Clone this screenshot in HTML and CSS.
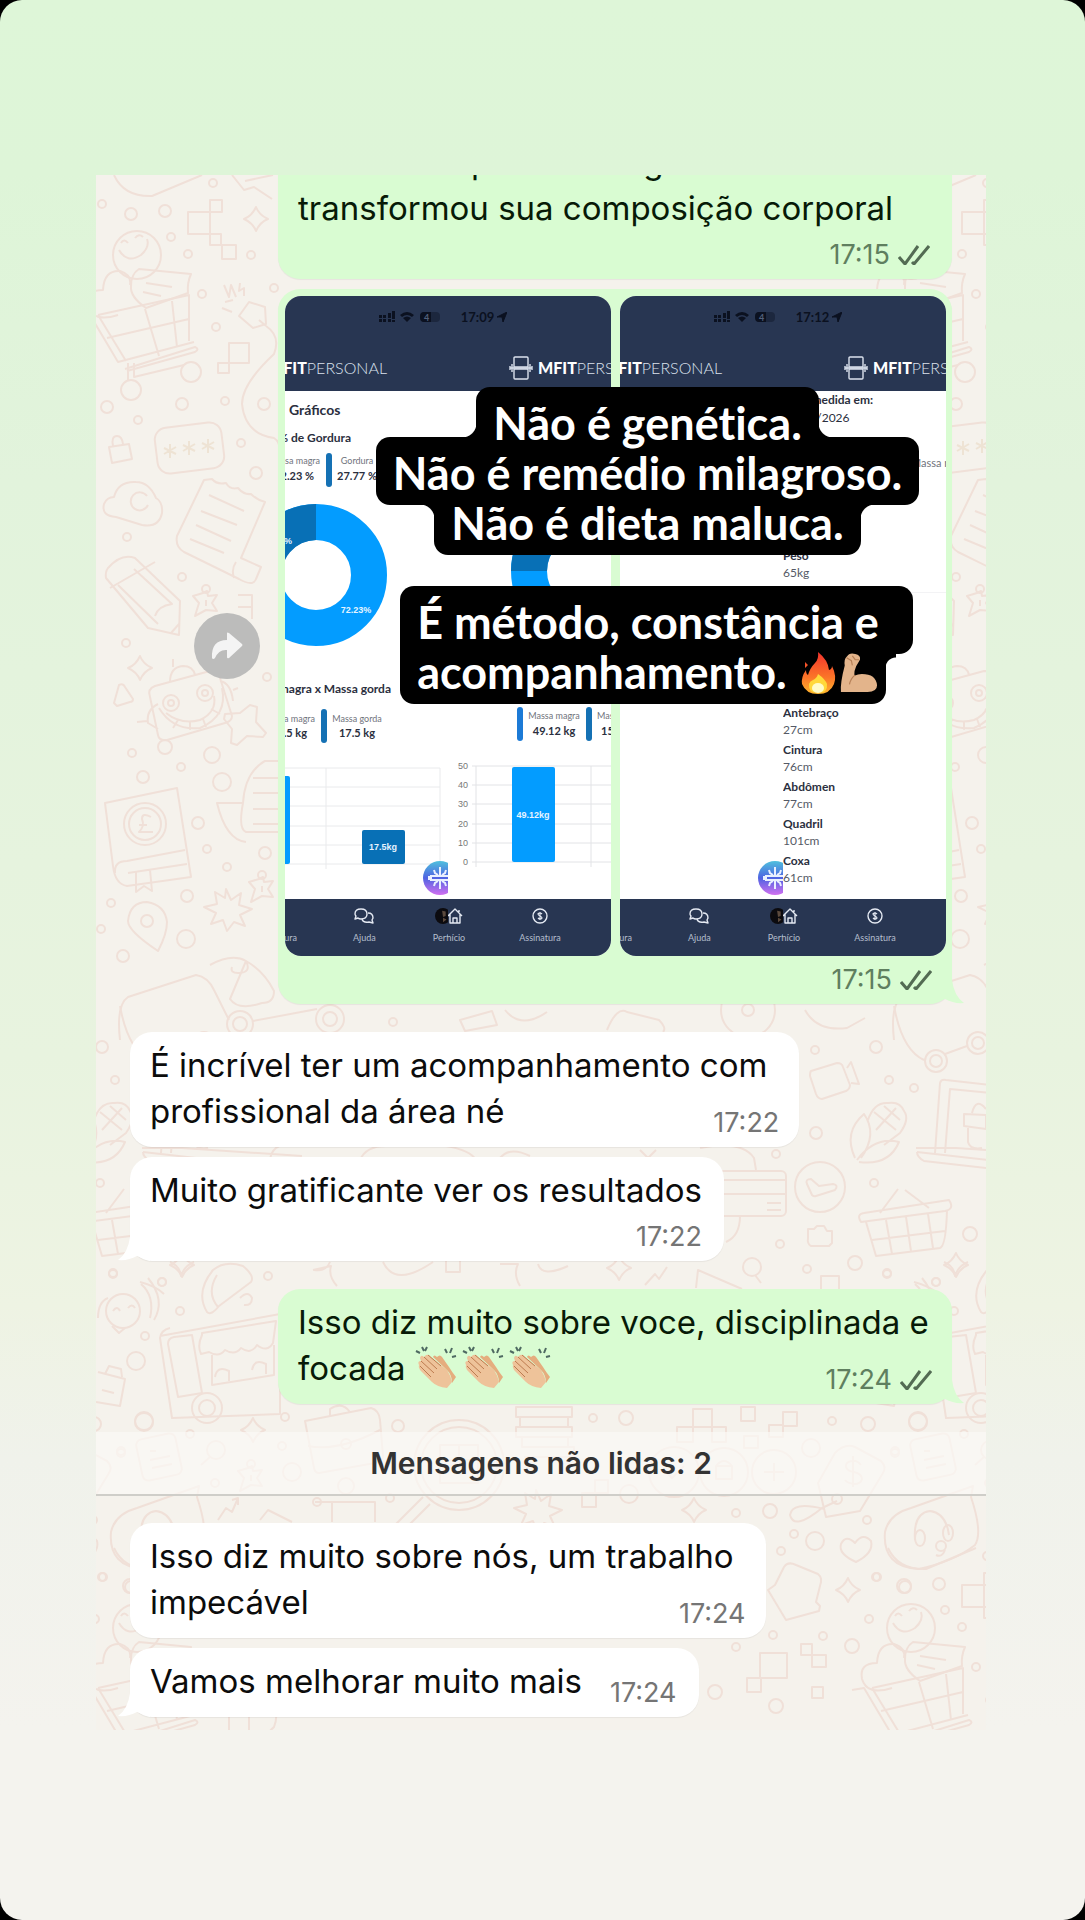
FILE: index.html
```html
<!DOCTYPE html>
<html lang="pt-BR">
<head>
  <meta charset="UTF-8">
  <meta name="viewport" content="width=device-width, initial-scale=1.0">
  <title>Não é genética. É método</title>
  <link rel="stylesheet" href="styles.css">
</head>
<body>
  <!-- Shared icons -->
  <svg class="defs" aria-hidden="true">
    <defs>
      <symbol id="checks" viewBox="0 0 32 20">
        <path d="M1 12l6 7L20 1M14 17l2 2L31 1" fill="none" stroke="#536b53" stroke-width="3"/>
      </symbol>
      <symbol id="status" viewBox="0 0 62 14">
        <g fill="#0b1120">
          <path d="M0 5h3v3H0zM0 9h3v3H0zM4 5h3v3H4zM4 9h3v3H4zM9 3h3v5H9zM9 9h3v3H9zM13 1h3v8h-3zM13 10h3v2h-3z"/>
          <path d="M21 5q7-6 14 0l-2 2q-5-4-10 0zM24 8q4-3 8 0l-4 4z"/>
          <rect x="41" y="2" width="20" height="10" rx="4" opacity=".4"/>
          <path d="M45 2h7v10h-7q-4 0-4-5t4-5z"/>
        </g>
        <text x="45" y="11" font-size="9" font-weight="700" fill="#52607c">4</text>
      </symbol>
      <symbol id="nav-arrow" viewBox="0 0 10 10"><path d="M0 5L10 0 6 10 5 5z" fill="#0b1120" stroke="#0b1120"/></symbol>
      <symbol id="mfit" viewBox="0 0 24 24">
        <g fill="none" stroke="#dbe2ee" stroke-width="1.4">
          <path d="M5 11V2q0-1 1-1h12q1 0 1 1v9zM5 13v9q0 1 1 1h12q1 0 1-1v-9z"/>
          <path d="M1 10v4M3 8v8M21 8v8M23 10v4M1 12h22"/>
        </g>
      </symbol>
      <symbol id="chat" viewBox="0 0 20 16">
        <g fill="none" stroke="#e4e9f2" stroke-width="1.4" stroke-linejoin="round">
          <path d="M7 1q6 0 6 5t-6 5q-2 0-3-1l-3 1 1-3Q1 7 1 6q0-5 6-5z"/>
          <path d="M14 5q5 0 5 5l-1 2 1 3-4-1q-6 1-7-3"/>
        </g>
      </symbol>
      <symbol id="home" viewBox="0 0 16 16">
        <path d="M1 8l7-7 7 7M3 6v9h10V6M6 15v-5h4v5M12 4V2" fill="none" stroke="#e4e9f2" stroke-width="1.4" stroke-linejoin="round"/>
      </symbol>
      <symbol id="money" viewBox="0 0 16 16">
        <circle cx="8" cy="8" r="7" fill="none" stroke="#e4e9f2" stroke-width="1.4"/>
        <path d="M10 6q-1-1-2-1-2 0-2 1t2 2 2 2-2 1q-1 0-2-1M8 4v8" fill="none" stroke="#e4e9f2" stroke-width="1.2"/>
      </symbol>
      <symbol id="face" viewBox="0 0 18 18">
        <circle cx="9" cy="9" r="9" fill="#0c0b0f"/>
        <path d="M8 3l4 1v5l-3 1zM9 11l4 2-4 3z" fill="#5c4a3d"/>
      </symbol>
      <linearGradient id="ai-fill" x1="0" y1="0" x2="0" y2="1">
        <stop offset="0" stop-color="#4fc0dd"/><stop offset=".5" stop-color="#4f63e2"/><stop offset="1" stop-color="#d070f0"/>
      </linearGradient>
      <symbol id="ai" viewBox="0 0 34 34">
        <circle cx="17" cy="17" r="17" fill="url(#ai-fill)"/>
        <path d="M8 14v6M6 15v4M8 15h18M8 19h18M17 6v9M17 19v9M11 9l1 3 3 2M23 9l-1 3-3 2M11 25l1-3 3-2M23 25l-1-3-3-2" fill="none" stroke="#eaf0ff" stroke-width="2"/>
      </symbol>
      <symbol id="clap" viewBox="0 0 42 43">
        <path d="M1 6l4 2M7 2l2 4M12 2l-2 4M30 4l2 4M37 3l-2 5M41 11l-4 1" stroke="#4f6a62" stroke-width="2"/>
        <path d="M4 20q-2-4 2-4l-1-3q1-4 4-1l2-2q3-1 5 2l16 13q4 6 5 12l-5 6q-10-1-15-6L5 25q-2-3-1-5z" fill="#eec39a"/>
        <path d="M22 12q3-3 5 0l7 10q3 5 7 10l-4 6q0-8-5-13L18 12q1-3 4 0z" fill="#e5ad7e"/>
        <path d="M6 16l13 12M9 12l13 12M13 10l13 11M5 21l11 11" fill="none" stroke="#bd7c50" stroke-width="1"/>
      </symbol>
      <linearGradient id="fire-fill" x1="0" y1="0" x2="0" y2="1">
        <stop offset="0" stop-color="#f2332c"/><stop offset=".6" stop-color="#fb7428"/><stop offset="1" stop-color="#ffb52d"/>
      </linearGradient>
      <symbol id="fire" viewBox="0 0 36 44">
        <path d="M17 1q10 8 11 18 3-1 3-4 5 10 2 18-4 10-16 10T1 33q-1-7 4-14 0 4 2 5 2-7 7-12 4-4 3-11zM4 11l3 3-3 3z" fill="url(#fire-fill)"/>
        <path d="M17 23q7 5 9 10 1 9-9 9t-9-9q1-3 4-4 4-2 5-6z" fill="#ffd83a"/>
        <ellipse cx="17" cy="37" rx="6" ry="5" fill="#fffbc8"/>
      </symbol>
      <symbol id="arm" viewBox="0 0 40 44">
        <path d="M5 14q-1-6 2-9 3-5 9-3 6 1 5 6l-4 7q-2 4-2 10 4-2 8-2 15 0 16 12 0 7-10 7H1q-1-9 4-28z" fill="#e3b48b"/>
        <path d="M16 24q-5 4-6 10M7 6l5 3 1 5M13 4l3 4 4 0" fill="none" stroke="#b67f56" stroke-width="1.2"/>
      </symbol>

      <!-- Wallpaper drawings -->
      <path id="spark" d="M0-12Q3-4 12 0 4 3 0 12-3 4-12 0-4-3 0-12z"/>
      <path id="burst" d="M0-20l5 11 10-7-2 12 13 4-12 6 5 11-11-4-7 9-4-11-12 4 5-11-12-6 13-3-2-12 10 6z"/>
      <g id="pin"><circle cy="-10" r="4"/><path d="M-3-6l-10 3 6 7-4 13 11-6 11 1-5-8 5-8-9 1-1-5zM0 1v6"/></g>
      <g id="lens"><circle r="9"/><path d="M-6 7l-9 8"/></g>
      <g id="doodles">
        <path d="M114 175q10 22 38 21l50-21M232 175l12 15 10-3 18 12M245 181l28-6"/>
        <path d="M188 212h22v22h-22zM210 200h12v12h-12zM210 234h11v11h-11zM222 245h14v14h-14zM229 343h20v20h-20zM218 363h11v10h-11z"/>
        <use href="#spark" x="256" y="219"/>
        <circle cx="137" cy="255" r="24"/>
        <path d="M121 243q3-5 7 0M135 238q4-5 8-1M119 250q8 14 22 5 9-8 6-16"/>
        <path d="M118 315q-25 8-30-9-3-16 15-16 1-20 17-19 12 4 10 14"/>
        <path d="M139 269l52 5q-4 9-3 19l-42 15q-16-11-15-22 0-12 8-17zM146 283l26 4M143 292l18 4"/>
        <path d="M78 317l12-2 28 47 76-20M98 315l91-20v46M145 309l14 47M172 301l5 46M107 338l82-19M98 315l28 46M128 363v18M134 363v14l50-12M125 369l70-22q5 2 0 5l-68 19"/>
        <circle cx="131" cy="390" r="10"/><circle cx="191" cy="372" r="10"/>
        <path d="M224 285l5 12 2-12 5 12M240 283l-1 8 5-3v8M225 302l8-2M222 308l10 4M239 316l10-14 16 5 1 17-13 4zM259 320l7 6"/>
        <path d="M266 326q15 10 8 28-32 30-32 50 3 30 32 34 8 5 5 20"/>
        <rect x="156" y="425" width="67" height="46" rx="12" transform="rotate(-7 189 448)"/>
        <path d="M170 444v14M164 448l12 6M176 447l-12 7M189 441v14M183 445l12 6M195 444l-12 7M208 439v14M202 443l12 6M214 442l-12 7" stroke="#eee3d4"/>
        <path d="M109 447l20-3 3 15-20 4zM113 446q-2-10 4-10 5 0 6 8"/>
        <path d="M116 517q-15-1-12-13 3-7 10-7 4-16 22-15 13 0 20 16 7 4 6 15-3 15-20 12zM147 496a9 9 0 1 0 1 9"/>
        <path d="M204 480l-27 56q-2 11 7 16l55 27q14 8 17 0l5-12-20-9 24-56q-8-2-14-8-7 1-13-6-8 2-12-5-9 2-14-4zM236 562q-5 7-2 16M209 495l35 16M201 511l36 14M196 525l35 16M190 539l34 14"/>
        <path d="M110 588l45-26M106 578l42 50 31 7 1-34-45-43q-14-5-27 10-3 4-2 10zM118 585l40 39M134 569l38 35q-14 2-17 12M171 633l8-9"/>
        <use href="#pin" x="206" y="599"/><use href="#spark" x="140" y="668"/>
        <path d="M114 703l5-18q4-2 6 2l8 12q0 3-3 3l-13 4zM238 595h14v24M238 607h14"/>
        <path d="M150 697q-3-8 5-11l55-15q8 0 10 7l12 38q0 5-7 7l-58 17q-8 1-9-5zM170 682q0-15 13-16 10 0 12 9M173 667v-8M158 704q-12 6-10 19l10 6M147 721l-10 1M220 681q11 2 13 20M233 690l5-2"/>
        <circle cx="171" cy="703" r="8"/><circle cx="205" cy="693" r="8"/><circle cx="171" cy="703" r="3"/><circle cx="205" cy="693" r="3"/>
        <path d="M159 708q14 23 41 20 28-12 22-40M166 713q15 12 34 7 17-8 14-24M178 720l-5 8M190 722v8M203 719l3 8M211 709l9 5"/>
        <path d="M225 714l15-1 10-8 7 2-1 15 10 11-3 4-16-1-10 9-6-2 1-14-8-10z"/>
        <path d="M246 842q-20-2-29-39h26q2-31 22-42h18v71h-37q-8-3-3-29M253 778h26M253 793h26M253 809h26M253 824h26"/>
        <path d="M105 803l72-15 14 89-64 9q-12-2-14-20zM115 873q-1-12 12-12l58-11M128 873l59-9M136 872v20l8-6 8 5-2-21"/>
        <circle cx="145" cy="824" r="21"/><circle cx="145" cy="824" r="16"/>
        <path d="M151 817q-9-5-9 2 3 7-3 13h14M139 825h8"/>
        <use href="#burst" x="226" y="909"/>
        <path d="M158 951q-30-20-30-30 2-19 19-19 18 3 20 20 0 12-9 29z"/><circle cx="147" cy="921" r="6"/>
        <use href="#pin" x="262" y="885"/>
        <path d="M120 1040q-4-35 8-43l68-22q12 2 18 15l15 30M210 965q22-12 36-4 6 12-8 12-8 0-6-6M246 961q18 10 28 30 0 12-12 12-24 8-32-4z"/>
        <circle cx="240" cy="1024" r="7"/><circle cx="240" cy="1024" r="13"/><circle cx="330" cy="1019" r="7"/><circle cx="330" cy="1019" r="14"/>
        <path d="M253 1021l64-12M460 1020l32-9 5 14-32 6zM505 1010q16 20 42 2"/>
        <path d="M142 1148h40l120 8M270 1160q2-16 20-16M360 1160q6-14 26-14h60q24 4 30 14M500 1158q10-12 30-2M640 1150l8 8 8-8"/>
        <path d="M207 1312q-12-20 6-42 12-10 30-4 12 10 8 16l-32 24q-8 10-12 6zM218 1307q-12-14-1-32M240 1298q8-8 12 0 0 8-8 7"/>
        <path d="M170 1262q10 4 11 14 3-10 13-14M313 1270l18-4q-3 10 6 20M330 1262q-4 10-16 8M383 1262q12 26 50 0M446 1258h14v14h-14zM500 1264h18q-5 10 2 22M538 1264q4 14 30 2"/>
        <circle cx="123" cy="1311" r="17"/><path d="M113 1311q4-6 7 0M128 1308q4-5 7 0M112 1326l7 7 6-5M108 1298q-10 4-10 20M141 1284q14 12 9 34M148 1278q18 22 6 42"/>
        <path d="M160 1336l120-22v100l-108 4-12-80q1-8 10-10M168 1344q0-6 6-7l18-2 10 58-24 4zM202 1333l74-12-3 22q-6 10-16 2-6 10-16 3-6 8-16 2-6 8-16 2l-8 2q-4-8 1-19zM212 1355v30l62-10v-30M215 1377q2-12 14-6v10M252 1370q2-12 14-6v10"/>
        <circle cx="207" cy="1408" r="15"/><circle cx="207" cy="1408" r="8"/>
        <path d="M98 1372l27 7-5 27-24-4M105 1374l4-8 12 3 1 8M102 1390l12 3"/>
        <use href="#spark" x="253" y="1430"/>
        <path d="M305 1421l66-13q8 2 9 12l3 36q0 5-8 7l-56 10q-4 0-5-5zM330 1416v-7q12-8 20 3M308 1446q30 6 72-16"/><circle cx="346" cy="1444" r="5"/>
        <rect x="139" y="1436" width="40" height="42" rx="6" transform="rotate(-12 159 1457)"/>
        <path d="M150 1451h6M150 1460l20-4M152 1468l20-4"/>
        <use href="#lens" x="216" y="1450"/><use href="#pin" x="251" y="1474"/>
        <circle cx="459" cy="1465" r="45"/><circle cx="459" cy="1465" r="38"/>
        <path d="M423 1497l-32 32M430 1504l-22 22M440 1445h38v38h-38zM440 1460h38M459 1445v15"/>
        <path d="M516 1407h56v10h-56zM520 1417h48v10h-48zM516 1427h56v10h-56zM522 1437h46v10h-46zM524 1447h50v10h-50"/>
        <use href="#burst" x="536" y="1510"/>
        <path d="M218 1520l8-12 6 4 6-14M232 1500l6-2v7M315 1502h60v20M332 1502v20M260 1520l8-10 24 12"/>
        <circle cx="317" cy="1502" r="4"/><circle cx="390" cy="1498" r="4"/>
        <path d="M693 1409h19v18h-19zM677 1427h16v15h-16zM712 1427h14v15h-14zM741 1407h14v14h-14zM783 1412h14v14h-14zM769 1425h14v12h-14zM744 1436h14v12h-14zM595 1480h13v13h-13zM582 1493h14v14h-14z"/>
        <circle cx="674" cy="1472" r="25"/><circle cx="724" cy="1472" r="24"/><circle cx="774" cy="1472" r="22"/>
        <path d="M764 1472h20M774 1463v18M716 1466h16v13h-16zM716 1466q8-10 16 0M664 1470l8 8 12-12"/>
        <path d="M818 1483l17-30q10-10 20-6l26 14q6 6 2 12l-23 38-34 6zM824 1509q-32-8-34 6 4 16 32-7l15-7"/><circle cx="837" cy="1499" r="5"/>
        <path d="M861 1465q-4-5-9-4-7 1-6 6 1 4 8 5 8 2 8 7-1 5-8 5-7-1-9-4M853 1456v31"/>
        <path d="M911 1508q-22 6-26 24-3 35 34 37 36-8 56-24 8-12-4-48l2-11zM915 1540q-2-27 15-29 16 2 19 24M945 1550q-3 8-9 5"/>
        <ellipse cx="920" cy="1538" rx="5" ry="8"/><ellipse cx="948" cy="1533" rx="5" ry="8"/><circle cx="941" cy="1546" r="5"/>
        <path d="M856 1562q-18-8-15-18 5-10 14-1 8-11 16-2 3 12-15 21z"/>
        <path d="M775 1585l9-18q4-6 12-2l22 9q5 4 2 12l-4 16 4 4-1 5-33 9-18-30z"/>
        <use href="#spark" x="848" y="1590"/><use href="#spark" x="694" y="1510"/>
        <path d="M760 1653h27v25h-27zM747 1678h14v14h-14zM801 1644h11v11h-11zM812 1655h14v12h-14zM812 1687h11v11h-11z"/>
        <path d="M811 1071l26-8q5 0 6 4l7 18q0 4-4 6l-24 8q-4 0-6-5l-6-18q0-4 1-5zM847 1068l4-6 8 22-8-1"/>
        <path d="M855 1158q-12-26 9-44 14 20-3 44M857 1160q18-24 42-18-10 24-40 20M868 1120q6-18 20-17 12-2 16 8 6 8-4 22l-16 12M874 1112l22 18M884 1106l16 14M876 1130l20-22"/>
        <path d="M935 1153l5-70q1-4 6-3l52 6M945 1153l5-64 50 5M917 1152l80 9-1 8-72-8q-7-4-7-9M964 1114l22 1v14l-22-3zM968 1128v14q2 8 14 6M972 1113q4-16 14-4"/>
        <rect x="690" y="1171" width="96" height="45" rx="5"/><path d="M690 1180h96M690 1194h96M767 1203h14M767 1210h14M740 1216q0 20-14 26M700 1148q42-8 54 10l2 12"/>
        <circle cx="820" cy="1187" r="25"/><path d="M811 1179q-6 0-4 5l5 11q2 2 4 1l19-6q4-5-2-6l-14 2z"/>
        <path d="M808 1229h6l3-3h7l3 5h5v12l-3 3h-18q-4-2-3-8z"/>
        <path d="M864 1213q-8 1-3 9l84-11q10-2 4-11zM866 1222l10 34 64-8q6-2 7-38M886 1220l6 34M906 1217l5 34M928 1214l5 34M872 1240l73-9M880 1213l18-24M905 1190l24 18"/>
        <use href="#spark" x="956" y="1265"/><use href="#spark" x="619" y="1268"/>
        <circle cx="752" cy="1267" r="9"/><path d="M755 1275l6 8M645 1285l10-11 4 5 8-12M696 1288l2-18 44 19M821 1276h18v14h-18zM914 1282q16 4 24 12"/>
        <path d="M894 1006q8 44 30 54M945 1054l22-8M805 1010q12 22 42 18l18-10M607 1030q10-24 20-18l32 8q8 8 4 12"/>
        <circle cx="936" cy="1061" r="11"/><circle cx="936" cy="1061" r="6"/><circle cx="978" cy="1043" r="11"/><circle cx="978" cy="1043" r="6"/><circle cx="748" cy="1010" r="27"/><circle cx="748" cy="1010" r="6"/><circle cx="680" cy="1090" r="6"/>
        <g>
          <circle cx="102" cy="204" r="4"/><circle cx="131" cy="214" r="6"/><circle cx="165" cy="211" r="6"/><circle cx="213" cy="183" r="4"/><circle cx="171" cy="237" r="4"/><circle cx="188" cy="254" r="4"/><circle cx="251" cy="255" r="4"/><circle cx="202" cy="294" r="4"/><circle cx="216" cy="327" r="4"/><circle cx="274" cy="288" r="4"/>
          <circle cx="107" cy="407" r="6"/><circle cx="182" cy="404" r="6"/><circle cx="225" cy="401" r="4"/><circle cx="264" cy="404" r="6"/><circle cx="138" cy="420" r="4"/><circle cx="241" cy="443" r="4"/><circle cx="256" cy="473" r="6"/><circle cx="127" cy="537" r="4"/><circle cx="182" cy="577" r="4"/><circle cx="126" cy="643" r="4"/>
          <circle cx="165" cy="747" r="7"/><circle cx="132" cy="753" r="4"/><circle cx="212" cy="755" r="8"/><circle cx="181" cy="767" r="4"/><circle cx="143" cy="777" r="6"/><circle cx="222" cy="782" r="9"/><circle cx="198" cy="823" r="6"/><circle cx="207" cy="849" r="4"/><circle cx="227" cy="867" r="4"/><circle cx="265" cy="853" r="6"/><circle cx="187" cy="896" r="6"/><circle cx="111" cy="903" r="4"/><circle cx="101" cy="929" r="4"/><circle cx="186" cy="939" r="9"/><circle cx="123" cy="956" r="6"/><circle cx="267" cy="677" r="4"/>
          <circle cx="393" cy="1022" r="4"/><circle cx="113" cy="1273" r="4"/><circle cx="268" cy="1276" r="4"/><circle cx="162" cy="1282" r="4"/><circle cx="180" cy="1311" r="4"/><circle cx="145" cy="1336" r="4"/><circle cx="136" cy="1361" r="9"/><circle cx="144" cy="1422" r="9"/><circle cx="285" cy="1417" r="4"/><circle cx="398" cy="1426" r="6"/><circle cx="190" cy="1434" r="4"/><circle cx="121" cy="1453" r="4"/><circle cx="282" cy="1446" r="4"/><circle cx="292" cy="1472" r="9"/><circle cx="346" cy="1486" r="8"/><circle cx="215" cy="1483" r="4"/>
          <circle cx="593" cy="1418" r="4"/><circle cx="626" cy="1418" r="7"/><circle cx="832" cy="1421" r="4"/><circle cx="868" cy="1424" r="7"/><circle cx="918" cy="1421" r="9"/><circle cx="811" cy="1448" r="9"/><circle cx="895" cy="1451" r="4"/><circle cx="629" cy="1494" r="9"/><circle cx="736" cy="1513" r="4"/><circle cx="770" cy="1511" r="7"/><circle cx="867" cy="1520" r="4"/><circle cx="794" cy="1534" r="4"/><circle cx="815" cy="1541" r="9"/><circle cx="781" cy="1551" r="4"/><circle cx="877" cy="1577" r="4"/><circle cx="904" cy="1586" r="7"/><circle cx="869" cy="1619" r="4"/><circle cx="773" cy="1635" r="4"/><circle cx="823" cy="1636" r="4"/><circle cx="852" cy="1646" r="7"/><circle cx="736" cy="1647" r="4"/><circle cx="715" cy="1692" r="7"/><circle cx="776" cy="1706" r="7"/>
          <circle cx="815" cy="1050" r="4"/><circle cx="876" cy="1047" r="6"/><circle cx="889" cy="1080" r="4"/><circle cx="914" cy="1088" r="4"/><circle cx="816" cy="1133" r="6"/><circle cx="776" cy="1154" r="4"/><circle cx="874" cy="1183" r="4"/><circle cx="780" cy="1244" r="4"/><circle cx="807" cy="1269" r="4"/><circle cx="855" cy="1263" r="7"/><circle cx="887" cy="1274" r="4"/><circle cx="936" cy="1282" r="4"/><circle cx="970" cy="1234" r="7"/>
        </g>
      </g>
    </defs>
  </svg>

  <main class="story">
    <section class="chat" aria-label="Conversa">
      <svg class="wallpaper" viewBox="96 175 890 1555" preserveAspectRatio="xMidYMin slice" aria-hidden="true">
        <g fill="none" stroke="#f0e0d8" stroke-width="2" stroke-linejoin="round">
          <use href="#doodles"/>
          <use href="#doodles" x="774"/>
          <use href="#doodles" x="-774"/>
          <use href="#doodles" y="1373"/>
          <use href="#doodles" x="774" y="1373"/>
        </g>
      </svg>

      <article class="bubble sent first">
        <p class="cut"><span>p</span><span>g</span></p>
        <p>transformou sua composição corporal</p>
        <footer class="meta own-line"><time>17:15</time><svg class="checks"><use href="#checks"/></svg></footer>
      </article>

      <article class="bubble sent media tail">
        <div class="shots">
          <figure class="shot">
            <header class="shot-top">
              <div class="status-bar"><svg class="status"><use href="#status"/></svg><span>17:09</span><svg class="nav-arrow"><use href="#nav-arrow"/></svg></div>
              <div class="brands">
                <div class="brand-left"><b>MFIT</b>PERSONAL</div>
                <div class="brand-right"><svg class="mfit"><use href="#mfit"/></svg><span><b>MFIT</b>PERSONAL</span></div>
              </div>
            </header>
            <div class="panes">
              <div class="pane graphs">
                <svg viewBox="0 0 163 508" class="plot" role="img" aria-label="Gráficos de gordura e massa">
                  <g class="head"><text x="4" y="24" font-size="14">Gráficos</text><text x="66" y="51" font-size="12" text-anchor="end">% de Gordura</text><text x="106" y="302" font-size="12" text-anchor="end">Massa magra x Massa gorda</text></g>
                  <g class="tag"><text x="35" y="73" text-anchor="end">Massa magra</text><text x="72" y="73" text-anchor="middle">Gordura</text><text x="30" y="331" text-anchor="end">Massa magra</text><text x="72" y="331" text-anchor="middle">Massa gorda</text></g>
                  <g class="num"><text x="29" y="89" text-anchor="end">72.23 %</text><text x="72" y="89" text-anchor="middle">27.77 %</text><text x="22" y="346" text-anchor="end">45.5 kg</text><text x="72" y="346" text-anchor="middle">17.5 kg</text></g>
                  <rect x="41" y="62" width="6" height="34" rx="3" fill="#1571b4"/>
                  <rect x="36" y="318" width="6" height="34" rx="3" fill="#1571b4"/>
                  <circle cx="31" cy="184" r="53" fill="none" stroke="#039cff" stroke-width="36"/>
                  <path d="M31 113v36a35 35 0 0 0-34 40l-36 6A71 71 0 0 1 31 113z" fill="#0870b6"/>
                  <text x="7" y="153" text-anchor="end" class="slice">27.77%</text><text x="71" y="222" text-anchor="middle" class="slice">72.23%</text>
                  <path d="M0 377h155M0 396h155M0 415h155M0 435h155M0 454h155M0 473h155M41 377v101M155 377v96" stroke="#e9eaec" fill="none"/>
                  <rect x="-30" y="385" width="35" height="88" rx="2" fill="#039cff"/>
                  <rect x="77" y="439" width="43" height="34" rx="2" fill="#0870b6"/>
                  <text x="98" y="459" text-anchor="middle" class="slice">17.5kg</text>
                  <use href="#ai" x="138" y="470" width="34" height="34"/>
                </svg>
              </div>
              <div class="pane graphs">
                <svg viewBox="0 0 163 508" class="plot" role="img" aria-label="Massa magra 49.12 kg">
                  <circle cx="134" cy="180" r="53" fill="none" stroke="#039cff" stroke-width="36"/>
                  <path d="M134 109v36a35 35 0 0 0-35 35H63a71 71 0 0 1 71-71z" fill="#0870b6"/>
                  <rect x="69" y="316" width="6" height="34" rx="3" fill="#1c7ad6"/>
                  <rect x="138" y="316" width="6" height="34" rx="3" fill="#1571b4"/>
                  <g class="tag"><text x="106" y="328" text-anchor="middle">Massa magra</text><text x="149" y="328">Massa gorda</text></g>
                  <g class="num"><text x="106" y="344" text-anchor="middle">49.12 kg</text><text x="153" y="344">15.88 kg</text></g>
                  <g class="axis"><text x="20" y="378">50</text><text x="20" y="397">40</text><text x="20" y="416">30</text><text x="20" y="436">20</text><text x="20" y="455">10</text><text x="20" y="474">0</text></g>
                  <path d="M24 375h139M24 394h139M24 413h139M24 433h139M24 452h139M24 471h139M28 375v101M143 375v101" stroke="#e2e3e6" fill="none"/>
                  <rect x="64" y="376" width="43" height="95" rx="2" fill="#039cff"/>
                  <text x="85" y="427" text-anchor="middle" class="slice">49.12kg</text>
                </svg>
              </div>
            </div>
            <div class="tabs">
              <div class="tabs-half"><span class="tab-cut">Assinatura</span><span class="tab"><svg class="chat-icon"><use href="#chat"/></svg>Ajuda</span><span class="tab tab-perfil"><svg class="face"><use href="#face"/></svg>Perfil</span></div>
              <div class="tabs-half"><span class="tab tab-home"><svg><use href="#home"/></svg>Início</span><span class="tab tab-money"><svg><use href="#money"/></svg>Assinatura</span></div>
            </div>
          </figure>

          <figure class="shot">
            <header class="shot-top">
              <div class="status-bar"><svg class="status"><use href="#status"/></svg><span>17:12</span><svg class="nav-arrow"><use href="#nav-arrow"/></svg></div>
              <div class="brands">
                <div class="brand-left"><b>MFIT</b>PERSONAL</div>
                <div class="brand-right"><svg class="mfit"><use href="#mfit"/></svg><span><b>MFIT</b>PERSONAL</span></div>
              </div>
            </header>
            <div class="panes">
              <div class="pane blank"><svg class="ai"><use href="#ai"/></svg></div>
              <div class="pane">
                <dl class="taken"><dt>Data medida em:</dt><dd>01/01/2026</dd></dl>
                <p class="side">Massa magra</p>
                <dl class="measures weight"><dt>Peso</dt><dd>65kg</dd></dl>
                <dl class="measures">
                  <dt>Antebraço</dt><dd>27cm</dd>
                  <dt>Cintura</dt><dd>76cm</dd>
                  <dt>Abdômen</dt><dd>77cm</dd>
                  <dt>Quadril</dt><dd>101cm</dd>
                  <dt>Coxa</dt><dd>61cm</dd>
                </dl>
              </div>
            </div>
            <div class="tabs">
              <div class="tabs-half"><span class="tab-cut">Assinatura</span><span class="tab"><svg class="chat-icon"><use href="#chat"/></svg>Ajuda</span><span class="tab tab-perfil"><svg class="face"><use href="#face"/></svg>Perfil</span></div>
              <div class="tabs-half"><span class="tab tab-home"><svg><use href="#home"/></svg>Início</span><span class="tab tab-money"><svg><use href="#money"/></svg>Assinatura</span></div>
            </div>
          </figure>
        </div>
        <footer class="meta own-line"><time>17:15</time><svg class="checks"><use href="#checks"/></svg></footer>

        <button class="forward" type="button" aria-label="Encaminhar">
          <svg viewBox="0 0 32 28"><path d="M1 26Q0 8 16 8V1q0-1 2 0l13 11q1 1 0 2L18 26q-2 1-2-1v-7Q8 17 4 26q-2 2-3 0z" fill="#f4f4f4"/></svg>
        </button>

        <!-- Story caption over the pictures -->
        <div class="caption">
          <p class="block"><span class="line flare-down">Não é genética.</span><span class="line">Não é remédio milagroso.</span><span class="line flare-up">Não é dieta maluca.</span></p>
          <p class="block second"><span class="line long">É método, constância e</span><span class="line flare-up flush">acompanhamento. <svg class="emoji" role="img" aria-label="fogo"><use href="#fire"/></svg><svg class="emoji" role="img" aria-label="bíceps"><use href="#arm"/></svg></span></p>
        </div>
      </article>

      <article class="bubble received two-lines after-gap">
        <p>É incrível ter um acompanhamento com<br>profissional da área né</p>
        <footer class="meta"><time>17:22</time></footer>
      </article>
      <article class="bubble received tail">
        <p>Muito gratificante ver os resultados</p>
        <footer class="meta own-line"><time>17:22</time></footer>
      </article>

      <article class="bubble sent tail after-gap">
        <p>Isso diz muito sobre voce, disciplinada e<br>focada <svg class="clap" role="img" aria-label="palmas"><use href="#clap"/></svg><svg class="clap" role="img" aria-label="palmas"><use href="#clap"/></svg><svg class="clap" role="img" aria-label="palmas"><use href="#clap"/></svg></p>
        <footer class="meta"><time>17:24</time><svg class="checks"><use href="#checks"/></svg></footer>
      </article>

      <h2 class="unread">Mensagens não lidas: 2</h2>

      <article class="bubble received two-lines">
        <p>Isso diz muito sobre nós, um trabalho<br>impecável</p>
        <footer class="meta"><time>17:24</time></footer>
      </article>
      <article class="bubble received tail inline">
        <p>Vamos melhorar muito mais</p>
        <footer class="meta"><time>17:24</time></footer>
      </article>
    </section>
  </main>
</body>
</html>
```

FILE: styles.css
```css
* {
  box-sizing: border-box;
}
body {
  margin: 0;
  background: #000;
  font-family: Inter, "Liberation Sans", sans-serif;
}
p, h2, figure, dl, dd {
  margin: 0;
}
.defs {
  position: absolute;
  width: 0;
  height: 0;
}
.story {
  min-height: 100vh;
  padding: 175px 99px 190px 96px;
  border-radius: 22px;
  background: linear-gradient(#def6d8 0, #def5d8 9%, #e2f3dc 25%, #e8f3df 55%, #eef3e3 68%, #f0f2eb 76%, #f4f3ee 90%);
}

/* Conversation */
.chat {
  position: relative;
  display: flex;
  flex-direction: column;
  align-items: flex-start;
  gap: 10px;
  padding-bottom: 13px;
  overflow: hidden;
  background: #f5f2ec;
}
.wallpaper {
  position: absolute;
  inset: 0;
  width: 100%;
  height: 100%;
}
.bubble {
  position: relative;
  margin-left: 34px;
  padding: 10px 22px 13px 20px;
  border-radius: 22px;
  background: #fff;
  color: #0c0c0c;
  font-size: 33px;
  line-height: 46px;
  white-space: nowrap;
  box-shadow: 0 1px 1px rgba(0, 0, 0, .06);
}
.sent {
  align-self: flex-end;
  width: 674px;
  margin-right: 34px;
  margin-left: 0;
  background: #d9fcd2;
  color: #071a07;
}
.two-lines {
  padding-right: 32px;
}
.first {
  margin-top: -46px;
  padding-bottom: 8px;
}
.cut {
  display: flex;
  gap: 152px;
  padding-left: 173px;
}
.meta {
  position: absolute;
  right: 20px;
  bottom: 8px;
  display: flex;
  align-items: center;
  gap: 8px;
  color: #757575;
  font-size: 27px;
  line-height: 32px;
}
.sent .meta {
  color: #5f7f5f;
}
.bubble .own-line {
  position: static;
  justify-content: flex-end;
  margin-top: 8px;
}
.checks {
  width: 32px;
  height: 20px;
}
.tail::after {
  content: "";
  position: absolute;
  bottom: 0;
  left: -12px;
  width: 32px;
  height: 30px;
  background: #fff;
  clip-path: path("M12 0v6Q10 22 0 29q10 1 19-4l13 5V0z");
}
.sent.tail::after {
  right: -12px;
  left: auto;
  background: #d9fcd2;
  clip-path: path("M20 0v6q2 16 12 23-10 1-19-4L0 30V0z");
}
.received + .received {
  padding-bottom: 8px;
}
.after-gap {
  margin-top: 18px;
}
.clap {
  width: 42px;
  height: 43px;
  margin-right: 5px;
  vertical-align: -8px;
}
.inline {
  display: flex;
  align-items: flex-end;
  gap: 28px;
}
.inline p {
  padding-bottom: 5px;
}
.inline .meta {
  position: static;
}
.unread {
  position: relative;
  width: 100%;
  margin: 18px 0 17px;
  border-bottom: 2px solid #cfcec9;
  background: rgba(251, 250, 247, .7);
  color: #333;
  font-size: 30px;
  font-weight: 600;
  line-height: 62px;
  text-align: center;
}

/* Progress pictures */
.media {
  padding: 7px 6px 8px 7px;
}
.media .own-line {
  margin-right: 14px;
}
.shots {
  display: grid;
  grid-template-columns: 1fr 1fr;
  gap: 9px;
}
.shot {
  display: flex;
  flex-direction: column;
  min-width: 0;
  height: 660px;
  overflow: hidden;
  border-radius: 16px;
  background: #fff;
  font-family: Lato, sans-serif;
  line-height: 18px;
}
.shot-top {
  flex: 0 0 95px;
  background: #283652;
}
.status-bar {
  display: flex;
  justify-content: center;
  align-items: center;
  padding: 12px 10px 0 0;
  color: #0b1120;
  font-size: 13px;
  font-weight: 700;
}
.status {
  width: 62px;
  height: 14px;
  margin-right: 20px;
}
.nav-arrow {
  width: 10px;
  height: 10px;
  margin-left: 3px;
}
.brands {
  display: grid;
  grid-template-columns: 1fr 1fr;
  padding-top: 30px;
  color: #dbe2ee;
  font-size: 16px;
  font-weight: 300;
  line-height: 24px;
}
.brands b {
  color: #fff;
  font-weight: 900;
}
.brand-left, .brand-right {
  display: flex;
  justify-content: flex-end;
  min-width: 0;
  overflow: hidden;
}
.brand-left {
  padding-right: 61px;
}
.brand-right {
  justify-content: flex-start;
  gap: 5px;
  padding-left: 61px;
}
.mfit {
  flex: none;
  width: 24px;
  height: 24px;
}
.panes {
  display: grid;
  flex: 1;
  grid-template-columns: 1fr 1fr;
}
.pane {
  min-width: 0;
  overflow: hidden;
  color: #2b3040;
}
.plot {
  display: block;
  width: 100%;
}
.head, .num {
  fill: #2b2f3e;
  font-weight: 700;
}
.tag {
  fill: #70737c;
  font-size: 9px;
}
.num {
  font-size: 11px;
}
.slice {
  fill: #e6f4ff;
  font-family: "Liberation Sans", sans-serif;
  font-size: 9px;
  font-weight: 700;
}
.axis {
  fill: #777;
  font-family: "Liberation Sans", sans-serif;
  font-size: 9px;
  text-anchor: end;
}
.blank {
  display: flex;
  justify-content: flex-end;
  align-items: flex-end;
  padding-bottom: 4px;
}
.ai {
  flex: none;
  width: 34px;
  height: 34px;
  margin-right: -9px;
}
.taken {
  font-size: 12px;
}
.taken dt {
  font-weight: 700;
}
.side {
  padding: 27px 0 0 128px;
  color: #70737c;
  font-size: 11px;
}
.measures {
  padding-top: 109px;
  font-size: 12px;
}
.measures dt {
  padding-top: 2px;
  font-weight: 700;
  line-height: 17px;
}
.measures dd {
  color: #555a66;
}
.weight {
  padding-top: 73px;
  padding-bottom: 10px;
  border-bottom: 1px solid #f3f3f5;
}
.tabs {
  display: grid;
  flex: 0 0 57px;
  grid-template-columns: 1fr 1fr;
  background: #283652;
  color: #b5becd;
  font-size: 9px;
}
.tabs-half {
  display: flex;
  min-width: 0;
  overflow: hidden;
}
.tab {
  display: flex;
  flex-direction: column;
  align-items: center;
  flex: none;
  gap: 5px;
  padding-top: 9px;
}
.tab svg {
  width: 16px;
  height: 16px;
}
.tab .chat-icon {
  width: 20px;
}
.tab-cut {
  display: flex;
  justify-content: flex-end;
  width: 12px;
  margin-right: 56px;
  padding-top: 30px;
}
.tab-perfil {
  margin-left: 57px;
}
.tab-home {
  margin-left: -4px;
}
.tab-money {
  margin-left: 54px;
}

/* Forward button beside the pictures */
.forward {
  position: absolute;
  top: 50%;
  left: -84px;
  display: flex;
  align-items: center;
  justify-content: center;
  width: 66px;
  height: 66px;
  margin-top: -34px;
  padding: 0;
  border: 0;
  border-radius: 50%;
  background: #bcbcbb;
}
.forward svg {
  width: 32px;
  height: 28px;
}

/* Caption sticker */
.caption {
  position: absolute;
  z-index: 1;
  top: 98px;
  left: 99px;
  display: flex;
  flex-direction: column;
  align-items: center;
  gap: 31px;
  width: 541px;
  color: #fff;
  font-family: Lato, "Open Sans", sans-serif;
  font-size: 45px;
  font-weight: 700;
  font-variant-ligatures: none;
}
.block {
  display: flex;
  flex-direction: column;
  align-items: center;
}
.second {
  align-items: flex-start;
  margin-left: 18px;
}
.line {
  position: relative;
  height: 68px;
  padding: 10px 17px 6px;
  line-height: 52px;
}
.line + .line {
  margin-top: -18px;
}
.line::before {
  content: "";
  position: absolute;
  z-index: -1;
  inset: 0;
  border-radius: 14px;
  background: #000;
}
.long {
  padding-right: 34px;
}
.flush {
  padding-right: 8px;
}

/* Rounded inner corners where a line meets a wider one */
.flare-down::after, .flare-up::after {
  content: "";
  position: absolute;
  z-index: -1;
  right: -14px;
  left: -14px;
  height: 14px;
}
.flare-down::after {
  bottom: 18px;
  background:
    radial-gradient(circle at 0 0, transparent 14px, #000 15px) left / 14px 14px no-repeat,
    radial-gradient(circle at 100% 0, transparent 14px, #000 15px) right / 14px 14px no-repeat;
}
.flare-up::after {
  top: 18px;
  background:
    radial-gradient(circle at 0 100%, transparent 14px, #000 15px) left / 14px 14px no-repeat,
    radial-gradient(circle at 100% 100%, transparent 14px, #000 15px) right / 14px 14px no-repeat;
}
.flush::after {
  right: -10px;
  left: 50%;
  background: radial-gradient(circle at 100% 100%, transparent 10px, #000 11px) right / 10px 14px no-repeat;
}
.flush::before {
  border-top-left-radius: 0;
}
.long::before {
  border-bottom-left-radius: 0;
}
.emoji {
  width: 38px;
  height: 44px;
  margin-left: 2px;
  vertical-align: -6px;
}
```
